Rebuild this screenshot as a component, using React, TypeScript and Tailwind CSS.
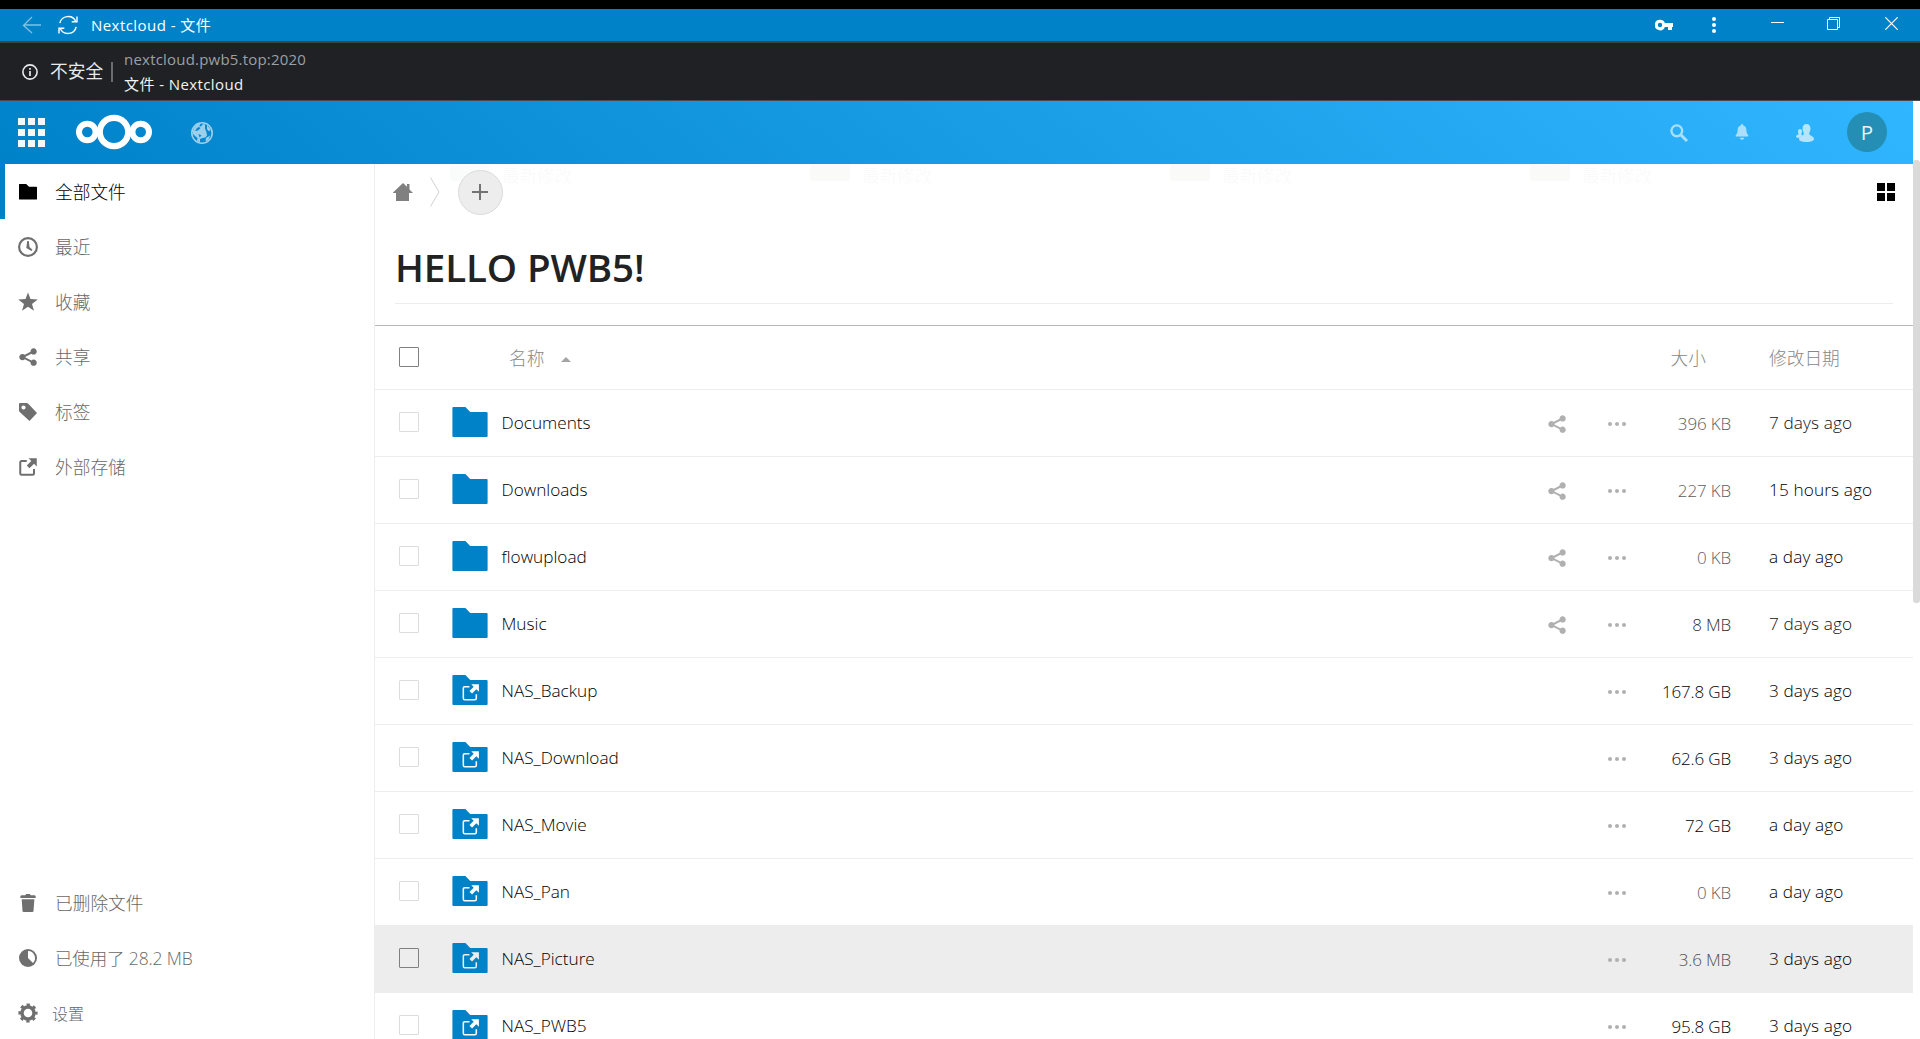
import React from "react";

const BASE = "font-['Open_Sans','Noto_Sans_CJK_SC',sans-serif]";

type Row = { name: string; ext?: boolean; size: string; sizeColor: string; date: string; dateColor: string; hover?: boolean };

const rows: Row[] = [
  { name: "Documents", size: "396 KB", sizeColor: "text-[#5c5c5c]", date: "7 days ago", dateColor: "text-[#111]" },
  { name: "Downloads", size: "227 KB", sizeColor: "text-[#5c5c5c]", date: "15 hours ago", dateColor: "text-black" },
  { name: "flowupload", size: "0 KB", sizeColor: "text-[#606060]", date: "a day ago", dateColor: "text-black" },
  { name: "Music", size: "8 MB", sizeColor: "text-[#303030]", date: "7 days ago", dateColor: "text-[#111]" },
  { name: "NAS_Backup", ext: true, size: "167.8 GB", sizeColor: "text-black", date: "3 days ago", dateColor: "text-black" },
  { name: "NAS_Download", ext: true, size: "62.6 GB", sizeColor: "text-black", date: "3 days ago", dateColor: "text-black" },
  { name: "NAS_Movie", ext: true, size: "72 GB", sizeColor: "text-black", date: "a day ago", dateColor: "text-black" },
  { name: "NAS_Pan", ext: true, size: "0 KB", sizeColor: "text-[#606060]", date: "a day ago", dateColor: "text-black" },
  { name: "NAS_Picture", ext: true, size: "3.6 MB", sizeColor: "text-[#505050]", date: "3 days ago", dateColor: "text-black", hover: true },
  { name: "NAS_PWB5", ext: true, size: "95.8 GB", sizeColor: "text-black", date: "3 days ago", dateColor: "text-black" },
];

function ShareIcon({ className }: { className: string }) {
  return (
    <svg viewBox="0 0 16 16" className={className} fill="currentColor">
      <path d="m12.5 1c-1.38 0-2.5 1.12-2.5 2.5 0 0.132 0.018 0.26 0.04 0.385l-4.6 2.3c-0.47-0.43-1.1-0.685-1.94-0.685-1.38 0-2.5 1.12-2.5 2.5s1.12 2.5 2.5 2.5c0.84 0 1.47-0.26 1.94-0.69l4.6 2.3c-0.02 0.13-0.04 0.26-0.04 0.39 0 1.38 1.12 2.5 2.5 2.5s2.5-1.12 2.5-2.5-1.12-2.5-2.5-2.5c-0.69 0-1.3 0.26-1.76 0.7l-4.77-2.4c0.02-0.1 0.03-0.2 0.03-0.3s-0.01-0.2-0.03-0.3l4.77-2.4c0.46 0.44 1.07 0.7 1.76 0.7 1.38 0 2.5-1.12 2.5-2.5s-1.12-2.5-2.5-2.5z" />
    </svg>
  );
}

function ExternalShape({ thin }: { thin?: boolean }) {
  return (
    <>
      <path d="M7 3.200H3C2.200 3.200 1.800 3.600 1.800 4.400v8.600c0 .8.4 1.200 1.200 1.200h8.600c.8 0 1.200-.4 1.200-1.200V9.500" fill="none" stroke="currentColor" strokeWidth={thin ? 1.3 : 1.6} />
      <path d="M8.500 1H15v6.500L12.800 5.300 9.200 8.900 7 6.700l3.600-3.600z" fill="currentColor" />
    </>
  );
}

const ico = "h-5 w-5";
const icons: Record<string, React.ReactNode> = {
  folder: (
    <svg viewBox="0 0 20 20" className={ico}><path d="M1 2.600Q1 2 1.600 2h6.600l2.800 2.800h7.400q.6 0 .6.600v11.500q0 .6-.6.600H1.600q-.6 0-.6-.6z" fill="#000" /></svg>
  ),
  clock: (
    <svg viewBox="0 0 20 20" className={ico}>
      <circle cx="10" cy="10" r="8.900" fill="none" stroke="currentColor" strokeWidth="2.200" />
      <path d="M9.200 4h1.600l.7 6 3 2.800-1 1.200L8.300 11z" fill="currentColor" />
    </svg>
  ),
  star: (
    <svg viewBox="0 0 20 20" className={ico} fill="currentColor"><path d="M10 .5l2.500 6.600 7.200.3-5.700 4.500 2 6.900-6-4-6 4 2-6.900L.3 7.400l7.200-.3z" /></svg>
  ),
  share: <ShareIcon className={ico} />,
  tag: (
    <svg viewBox="0 0 20 20" className={ico} fill="currentColor"><path fillRule="evenodd" d="M1 2.200C1 1.500 1.500 1 2.200 1h6.600c.5 0 .8.200 1.200.5l9 9.500-7.500 8L1.700 10C1.200 9.500 1 9 1 8.500zM5.500 3.400a2.100 2.100 0 1 0 .01 0z" /></svg>
  ),
  external: (
    <svg viewBox="0 0 16 16" className={ico}><ExternalShape /></svg>
  ),
  trash: (
    <svg viewBox="0 0 20 20" className={ico} fill="currentColor"><path d="M8 1h4l.6 1.200h4c.8 0 1.200.8 1.200 2.800H2.300c0-2 .4-2.800 1.200-2.800h4zM3.700 6.200h12.700L15.500 18c-.1.700-.5 1-1 1h-9c-.6 0-.9-.3-1-1z" /></svg>
  ),
  pie: (
    <svg viewBox="0 0 20 20" className={ico}>
      <circle cx="10" cy="10" r="9" fill="currentColor" />
      <path d="M10 3a7 7 0 0 1 5 11.900L10 10z" fill="#fff" />
    </svg>
  ),
  gear: (
    <svg viewBox="0 0 20 20" className={ico}>
      <circle cx="10" cy="10" r="6" fill="none" stroke="currentColor" strokeWidth="3.400" />
      <circle cx="10" cy="10" r="8.300" fill="none" stroke="currentColor" strokeWidth="2.600" strokeDasharray="3.260 3.260" strokeDashoffset="1.630" />
    </svg>
  ),
};

function NavItem({ icon, label, active, cls = "ml-[17px] text-[17.700px]" }: { icon: string; label: string; active?: boolean; cls?: string }) {
  return (
    <div className={`flex h-[55px] items-center border-l-[5px] pl-[13px] ${active ? "border-[#0082c9]" : "border-transparent text-[#6f6f6f]"}`}>
      {icons[icon]}
      <span className={`mt-[2px] font-light whitespace-pre ${active ? "text-black" : "text-[#686868]"} ${cls}`}>{label}</span>
    </div>
  );
}

function TitleBar() {
  return (
    <div className="flex h-8 items-center bg-[#0082c9] text-white">
      <svg viewBox="0 0 20 20" className="ml-[22px] h-5 w-5 opacity-50" fill="none" stroke="currentColor" strokeWidth="1.300"><path d="M10 2 1.500 10.500 10 18M1.500 10h17.500" /></svg>
      <svg viewBox="0 0 20 20" className="ml-4 h-5 w-5" fill="none" stroke="currentColor" strokeWidth="1.400">
        <path d="M1.800 8.200A8.500 8.500 0 0 1 17.800 6.500M18.200 11.800A8.500 8.500 0 0 1 2.200 13.500M19 1.500v5.300h-5.300M1 18.500v-5.300h5.300" />
      </svg>
      <span className="ml-[13px] text-[15px] font-medium tracking-[0.450px] whitespace-pre">Nextcloud - <span className="font-normal">文件</span></span>
      <div className="ml-auto flex items-center">
        <svg viewBox="0 0 18 12" className="mr-[39px] h-3 w-[18px]" fill="currentColor"><path fillRule="evenodd" d="M5 .7a5.300 5.300 0 1 0 4.900 7.300H13v3h4V8h1V4H9.900A5.300 5.300 0 0 0 5 .7zM5 3.800a2.200 2.200 0 1 1 0 4.400 2.200 2.200 0 0 1 0-4.400z" /></svg>
        <svg viewBox="0 0 4 16" className="mr-[55px] h-4 w-1" fill="currentColor"><circle cx="2" cy="2" r="2" /><circle cx="2" cy="8" r="2" /><circle cx="2" cy="14" r="2" /></svg>
        <svg viewBox="0 0 13 13" className="-mt-[3px] mr-[43px] h-[13px] w-[13px]" stroke="currentColor"><path d="M0 5.500h13" /></svg>
        <svg viewBox="0 0 13 13" className="-mt-[3px] mr-[45px] h-[13px] w-[13px]" fill="none" stroke="currentColor"><path d="M.5 2.500h10v10H.5zM2.500 2.500v-2h10v10h-2" /></svg>
        <svg viewBox="0 0 13 13" className="-mt-[3px] mr-[22px] h-[13px] w-[13px]" fill="none" stroke="currentColor" strokeWidth="1.200"><path d="M.3.3l12.400 12.400M12.700.3L.3 12.700" /></svg>
      </div>
    </div>
  );
}

function AddressBar() {
  return (
    <div className="flex h-[60px] items-center border-t-2 border-b border-t-[#3f4144] border-b-[#4a4a4a] bg-[#202124]">
      <svg viewBox="0 0 16 16" className="ml-[22px] h-4 w-4 text-[#e8eaed]" fill="none" stroke="currentColor">
        <circle cx="8" cy="8" r="7.100" strokeWidth="1.600" /><path d="M8 7v5M8 4v1.700" strokeWidth="1.700" />
      </svg>
      <span className="ml-3 text-[17.700px] text-[#e8eaed]">不安全</span>
      <div className="ml-[8px] h-5 w-[2px] bg-[#6b6c6f]" />
      <div className="ml-[11px] flex flex-col text-[15px] leading-[25px] whitespace-pre">
        <span className="tracking-[0.200px] text-[#9aa0a6]">nextcloud.pwb5.top:2020</span>
        <span className="font-medium tracking-[0.400px] text-[#f1f3f4]"><span className="font-normal">文件</span> - Nextcloud</span>
      </div>
    </div>
  );
}

function AppHeader() {
  return (
    <div className="flex h-[63px] w-[1913px] shrink-0 items-center bg-[linear-gradient(40deg,#0082c9_0%,#30b6ff_100%)] text-white">
      <div className="-mt-[1px] ml-[18px] grid grid-cols-3 gap-x-[3px] gap-y-[4px]">
        {Array.from({ length: 9 }, (_, i) => <div key={i} className="h-[7px] w-[7px] bg-white/95" />)}
      </div>
      <svg viewBox="0 0 76 36" className="-mt-[1px] ml-[31px] h-9 w-[76px]" fill="none" stroke="currentColor" strokeWidth="6">
        <circle cx="38" cy="18" r="14.200" strokeWidth="6.200" /><circle cx="11.300" cy="18" r="8.300" /><circle cx="64.700" cy="18" r="8.300" />
      </svg>
      <svg viewBox="0 0 22 22" className="ml-[39px] h-[22px] w-[22px] opacity-60" fill="none">
        <circle cx="11" cy="11" r="10.200" stroke="currentColor" strokeWidth="1.600" />
        <path d="M1.500 10 3 6l2.500-3L8 1.500l1.500 1L8 4l2 .5L12 2l2 .5v4l1.500 4 .5 3-1.500 2-3 .5-2.500 1L9 20.500l-3-1.500.500-3-2.500-2-2-2z" fill="currentColor" />
        <path d="M16 3l3 3.500.5 2-2 .5-1.500-2zM15 16l4-2.500-1.500 4.500-3 1.500z" fill="currentColor" />
        <path d="M6 6l2-1 1.500 1L7 8.500 4 9zM7.500 12l3 1.500-2 2z" fill="#0786cf" />
      </svg>
      <div className="-mt-[1px] ml-auto flex items-center">
        <svg viewBox="0 0 18 18" className="mt-[1px] mr-[47px] h-[18px] w-[18px] opacity-60" fill="none" stroke="currentColor"><path d="M11 11l6 6" strokeWidth="3" /><circle cx="6.800" cy="6.800" r="5.400" strokeWidth="2.400" /></svg>
        <svg viewBox="0 0 14 16" className="mr-[47px] h-4 w-[14px] opacity-60" fill="currentColor"><path d="M7 0c-.8 0-1 .5-1 1.300C3.700 2 2.600 4 2.600 6c0 3-.8 3.800-1.900 5v1.500h12.600V11c-1.100-1.200-1.900-2-1.900-5 0-2-1.100-4-3.400-4.700C8 .5 7.800 0 7 0zM4.800 13.700h4.400C9 15 8.200 15.700 7 15.700S5 15 4.800 13.700z" /></svg>
        <svg viewBox="0 0 18 18" className="mt-[1px] mr-[33px] h-[18px] w-[18px] opacity-65" fill="currentColor">
          <path d="M10.500 0c2.600 0 4 1.800 4 4.500 0 2-.7 3.300-1.200 4.200v1.500c0 1 4.700 1.800 4.700 4.800 0 1.800-3 3-7.500 3S3 17 3 15c0-3 4.700-3.800 4.700-4.800V8.700C7.200 7.800 6.500 6.500 6.500 4.500c0-2.700 1.400-4.500 4-4.500z" />
          <path d="M4 5c1.200 0 2 .8 2 2.400 0 1.600-.5 2-.7 2.600 0 1 .8.800 1.200 1.200L3 14C1 13.700 0 13.200 0 12.400c0-1.300 2.700-1.400 2.700-2.400-.3-.6-.7-1-.7-2.600C2 5.800 2.800 5 4 5z" />
        </svg>
        <div className="mr-[26px] flex h-10 w-10 items-center justify-center rounded-full bg-[#248eb5] text-[20.500px] text-white/90">P</div>
      </div>
    </div>
  );
}

function Checkbox({ dark }: { dark?: boolean }) {
  return <div className={`-mt-[2px] ml-[24px] h-5 w-5 shrink-0 rounded-[1px] border ${dark ? "border-[#808080]" : "border-[#dcdcdc]"}`} />;
}

function FileRow({ r }: { r: Row }) {
  return (
    <div className={`flex h-[67px] shrink-0 items-center border-b border-[#ededed] font-light ${r.hover ? "bg-[#ededed]" : ""}`}>
      <Checkbox dark={r.hover} />
      <svg viewBox="0 0 36 30" className={`-mt-[2px] ml-[33px] h-[30px] w-9 ${r.hover ? "text-[#ededed]" : "text-white"}`}>
        <path d="M1.400 0h12l4.800 5h16.400a1 1 0 0 1 1 1v23a1 1 0 0 1-1 1H1.400a1 1 0 0 1-1-1V1a1 1 0 0 1 1-1z" fill="#0082c9" />
        {r.ext && <g transform="translate(9.200 8) scale(1.180)"><ExternalShape thin /></g>}
      </svg>
      <span className="ml-[13.500px] text-[17.200px] text-black">{r.name}</span>
      <div className="ml-auto flex items-center text-[#b0b0b0]">
        {!r.ext && <ShareIcon className="mt-[1px] h-5 w-5" />}
        <svg viewBox="0 0 18 4" className="mt-[2px] ml-[41px] h-1 w-[18px]" fill="currentColor"><circle cx="2" cy="2" r="2" /><circle cx="9" cy="2" r="2" /><circle cx="16" cy="2" r="2" /></svg>
      </div>
      <span className={`mt-[2px] w-[105px] text-right text-[17px] tracking-[-0.150px] whitespace-pre ${r.sizeColor}`}>{r.size}</span>
      <span className={`ml-[38px] w-[144px] text-[17.200px] tracking-[0.120px] whitespace-pre ${r.dateColor}`}>{r.date}</span>
    </div>
  );
}

function FadedRecent() {
  return (
    <div className="pointer-events-none absolute top-0 left-[75px] flex w-[1440px]">
      {[0, 1, 2, 3].map((i) => (
        <div key={i} className="flex w-[360px] items-start">
          <div className={`h-[17px] w-10 rounded-b-[3px] ${i === 0 ? "bg-[#fafbfb]" : "bg-[#fafaf9]"}`} />
          <span className="ml-[12px] text-[17.500px] leading-[22px] font-light text-[#fafafa]">最新修改</span>
        </div>
      ))}
    </div>
  );
}

export default function App() {
  return (
    <div className={`flex h-[1039px] w-[1920px] flex-col overflow-hidden bg-white ${BASE}`}>
      <div className="h-[9px] shrink-0 bg-black" />
      <TitleBar />
      <AddressBar />
      <div className="flex min-h-0 flex-1">
        <div className="flex w-[1913px] flex-col">
          <AppHeader />
          <div className="flex min-h-0 flex-1">
            <div className="flex w-[375px] shrink-0 flex-col border-r border-[#ededed]">
              <NavItem icon="folder" label="全部文件" active />
              <NavItem icon="clock" label="最近" />
              <NavItem icon="star" label="收藏" />
              <NavItem icon="share" label="共享" />
              <NavItem icon="tag" label="标签" />
              <NavItem icon="external" label="外部存储" />
              <div className="mt-auto -mb-[1px]">
                <NavItem icon="trash" label="已删除文件" />
                <NavItem icon="pie" label="已使用了 28.2 MB" cls="ml-[17px] text-[17.500px] tracking-[-0.150px]" />
                <NavItem icon="gear" label="设置" cls="ml-[14px] text-[16px]" />
              </div>
            </div>
            <div className="flex min-w-0 flex-1 flex-col">
              <div className="relative flex h-[56px] shrink-0 items-center">
                <FadedRecent />
                <svg viewBox="0 0 20 18" className="ml-[18px] h-[18px] w-5" fill="#808080"><path d="M10 0 0 9.500V10h3v8h13v-8h4L16.500 6.500V1H14v2.800z" /></svg>
                <svg viewBox="0 0 10 30" className="ml-[17px] h-[30px] w-[10px]" fill="none" stroke="#d0d0d0"><path d="M.5.5 9 15 .5 29.500" /></svg>
                <div className="relative ml-[18px] flex h-[45px] w-[45px] items-center justify-center rounded-full border border-[#dbdbdb] bg-[#ededed]">
                  <svg viewBox="0 0 16 16" className="-mt-[1px] -ml-[1px] h-4 w-4" stroke="#737373" strokeWidth="2"><path d="M8 0v16M0 8h16" /></svg>
                </div>
                <svg viewBox="0 0 18 18" className="mr-[18px] ml-auto h-[18px] w-[18px]"><path d="M0 0h8v8H0zM10 0h8v8h-8zM0 10h8v8H0zM10 10h8v8h-8z" fill="#000" /></svg>
              </div>
              <div className="mx-[20px] flex h-[84px] shrink-0 items-center border-b border-[#ededed]">
                <h1 className="mt-[11px] text-[38.500px] leading-[50px] font-semibold tracking-[-0.100px] text-[#222]">HELLO PWB5!</h1>
              </div>
              <div className="mt-[21px] flex h-[65px] shrink-0 items-center border-t border-b border-t-[#b8b8b8] border-b-[#ededed] text-[17.700px] font-light text-[#888]">
                <Checkbox dark />
                <span className="mt-[2px] ml-[90px]">名称</span>
                <svg viewBox="0 0 10 5" className="mt-[3px] ml-[17px] h-[5px] w-[10px]" fill="#a5a5a5"><path d="M5 0l5 5H0z" /></svg>
                <span className="mt-[2px] ml-auto">大小</span>
                <span className="mt-[2px] ml-[63px] w-[144px]">修改日期</span>
              </div>
              {rows.map((r) => <FileRow key={r.name} r={r} />)}
            </div>
          </div>
        </div>
        <div className="w-[7px] pt-[59px]"><div className="h-[443px] rounded-[3px] bg-[#dadada]" /></div>
      </div>
    </div>
  );
}
